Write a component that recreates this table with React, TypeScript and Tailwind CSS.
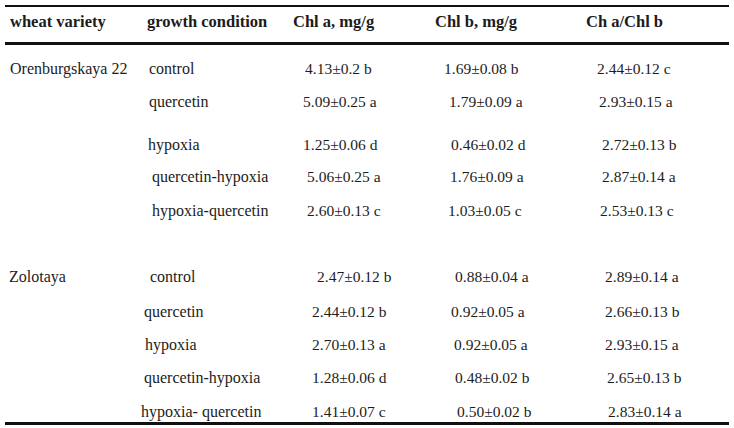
// chlorophyll table for two wheat varieties
type Cell = { text: string; pad: string }
type Row = { gap: string; cells: Cell[] }

const header: Cell[] = [
  { text: 'wheat variety', pad: 'pl-[5px]' },
  { text: 'growth condition', pad: 'pl-[7px]' },
  { text: 'Chl a, mg/g', pad: 'pl-[3px]' },
  { text: 'Chl b, mg/g', pad: 'pl-[5px]' },
  { text: 'Ch a/Chl b', pad: 'pl-[6px]' },
]

const rows: Row[] = [
  {
    gap: 'mt-[14px]',
    cells: [
      { text: 'Orenburgskaya 22', pad: 'pl-[5px]' },
      { text: 'control', pad: 'pl-[9px]' },
      { text: '4.13±0.2 b', pad: 'pl-[15px]' },
      { text: '1.69±0.08 b', pad: 'pl-[14px]' },
      { text: '2.44±0.12 c', pad: 'pl-[17px]' },
    ],
  },
  {
    gap: 'mt-[13px]',
    cells: [
      { text: '', pad: '' },
      { text: 'quercetin', pad: 'pl-[9px]' },
      { text: '5.09±0.25 a', pad: 'pl-[13px]' },
      { text: '1.79±0.09 a', pad: 'pl-[19px]' },
      { text: '2.93±0.15 a', pad: 'pl-[19px]' },
    ],
  },
  {
    gap: 'mt-[23px]',
    cells: [
      { text: '', pad: '' },
      { text: 'hypoxia', pad: 'pl-[8px]' },
      { text: '1.25±0.06 d', pad: 'pl-[13px]' },
      { text: '0.46±0.02 d', pad: 'pl-[21px]' },
      { text: '2.72±0.13 b', pad: 'pl-[22px]' },
    ],
  },
  {
    gap: 'mt-[12px]',
    cells: [
      { text: '', pad: '' },
      { text: 'quercetin-hypoxia', pad: 'pl-[12px]' },
      { text: '5.06±0.25 a', pad: 'pl-[17px]' },
      { text: '1.76±0.09 a', pad: 'pl-[20px]' },
      { text: '2.87±0.14 a', pad: 'pl-[22px]' },
    ],
  },
  {
    gap: 'mt-[14px]',
    cells: [
      { text: '', pad: '' },
      { text: 'hypoxia-quercetin', pad: 'pl-[12px]' },
      { text: '2.60±0.13 c', pad: 'pl-[17px]' },
      { text: '1.03±0.05 c', pad: 'pl-[18px]' },
      { text: '2.53±0.13 c', pad: 'pl-[20px]' },
    ],
  },
  {
    gap: 'mt-[46px]',
    cells: [
      { text: 'Zolotaya', pad: 'pl-[4px]' },
      { text: 'control', pad: 'pl-[10px]' },
      { text: '2.47±0.12 b', pad: 'pl-[27px]' },
      { text: '0.88±0.04 a', pad: 'pl-[25px]' },
      { text: '2.89±0.14 a', pad: 'pl-[25px]' },
    ],
  },
  {
    gap: 'mt-[15px]',
    cells: [
      { text: '', pad: '' },
      { text: 'quercetin', pad: 'pl-[4px]' },
      { text: '2.44±0.12 b', pad: 'pl-[22px]' },
      { text: '0.92±0.05 a', pad: 'pl-[21px]' },
      { text: '2.66±0.13 b', pad: 'pl-[25px]' },
    ],
  },
  {
    gap: 'mt-[13px]',
    cells: [
      { text: '', pad: '' },
      { text: 'hypoxia', pad: 'pl-[5px]' },
      { text: '2.70±0.13 a', pad: 'pl-[22px]' },
      { text: '0.92±0.05 a', pad: 'pl-[24px]' },
      { text: '2.93±0.15 a', pad: 'pl-[25px]' },
    ],
  },
  {
    gap: 'mt-[13px]',
    cells: [
      { text: '', pad: '' },
      { text: 'quercetin-hypoxia', pad: 'pl-[4px]' },
      { text: '1.28±0.06 d', pad: 'pl-[22px]' },
      { text: '0.48±0.02 b', pad: 'pl-[25px]' },
      { text: '2.65±0.13 b', pad: 'pl-[27px]' },
    ],
  },
  {
    gap: 'mt-[14px]',
    cells: [
      { text: '', pad: '' },
      { text: 'hypoxia- quercetin', pad: 'pl-[1px]' },
      { text: '1.41±0.07 c', pad: 'pl-[22px]' },
      { text: '0.50±0.02 b', pad: 'pl-[27px]' },
      { text: '2.83±0.14 a', pad: 'pl-[28px]' },
    ],
  },
]

const cols = 'grid grid-cols-[135px_150px_140px_150px_149px]'

const App = () => {
  return (
    <div className="w-[734px] h-[428px] bg-white overflow-hidden font-['Liberation_Serif',serif] text-[#1c1c1c]">
      <div className="ml-[5px] mt-[5px] w-[724px] border-t-2 border-b-[3px] border-[#111]">
        {/* header */}
        <div className={`${cols} pt-[5px] pb-[10px] border-b-[3px] border-[#111] text-[16.5px] leading-[20px] font-bold`}>
          {header.map((h, i) => (
            <div key={i} className={`${h.pad} whitespace-nowrap`}>
              {h.text}
            </div>
          ))}
        </div>

        {rows.map((row, r) => (
          <div key={r} className={`${cols} ${row.gap} leading-[20px]`}>
            {row.cells.map((c, i) => (
              <div
                key={i}
                className={`${c.pad} whitespace-nowrap ${i < 2 ? 'text-[16px]' : 'text-[15.5px]'}`}
              >
                {c.text}
              </div>
            ))}
          </div>
        ))}
      </div>
    </div>
  )
}

export default App
